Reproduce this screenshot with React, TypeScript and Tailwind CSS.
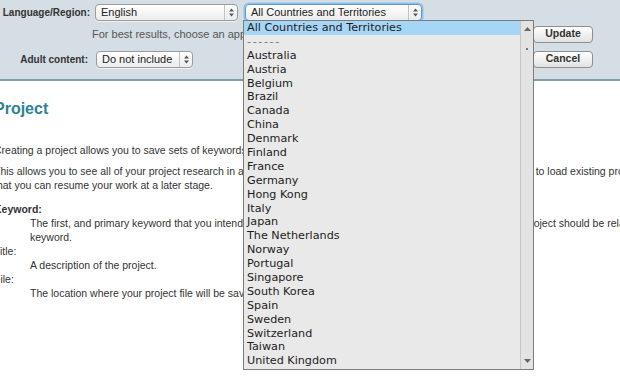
import React from "react";

const countries = [
  "Australia",
  "Austria",
  "Belgium",
  "Brazil",
  "Canada",
  "China",
  "Denmark",
  "Finland",
  "France",
  "Germany",
  "Hong Kong",
  "Italy",
  "Japan",
  "The Netherlands",
  "Norway",
  "Portugal",
  "Singapore",
  "South Korea",
  "Spain",
  "Sweden",
  "Switzerland",
  "Taiwan",
  "United Kingdom",
];

function UpDown() {
  return (
    <svg width="7" height="9" viewBox="0 0 7 9" className="block">
      <path d="M3.5 0.5 L6 3.5 L1 3.5 Z" fill="#555" />
      <path d="M3.5 8.5 L6 5.5 L1 5.5 Z" fill="#555" />
    </svg>
  );
}

function PopUp({
  label,
  width,
  focused,
}: {
  label: string;
  width: string;
  focused?: boolean;
}) {
  return (
    <div
      className={`${width} h-[17px] flex items-stretch rounded-[4px] border bg-gradient-to-b from-white to-[#ececec] text-[11px] text-[#222] ${
        focused
          ? "border-[#5e9bd6] shadow-[0_0_0_1.5px_#8fbfeb]"
          : "border-[#9c9c9c] shadow-[0_1px_0_rgba(255,255,255,0.6)]"
      }`}
    >
      <div className="flex-1 pl-[5px] leading-[15px] whitespace-nowrap overflow-hidden">
        {label}
      </div>
      <div className="w-[13px] border-l border-[#c2c2c2] flex items-center justify-center">
        <UpDown />
      </div>
    </div>
  );
}

function Button({ children }: { children: React.ReactNode }) {
  return (
    <div className="ml-auto w-[60px] h-[17px] rounded-[4px] border border-[#8e8e8e] bg-gradient-to-b from-white to-[#e2e2e2] text-[10.5px] font-bold text-[#333] flex items-center justify-center">
      {children}
    </div>
  );
}

function CountryList() {
  return (
    <div className="absolute left-[243px] top-[20px] w-[291px] h-[350px] border border-[#7c7c7c] bg-[#e9e9e9] flex font-['DejaVu_Sans',Verdana,sans-serif] text-[11.2px] text-[#1c1c1c]">
      <div className="flex-1 overflow-hidden">
        <div className="h-[13.9px] leading-[14.4px] pl-[3px] bg-[#a6d6f6] whitespace-nowrap">
          All Countries and Territories
        </div>
        <div className="h-[13.9px] leading-[14.4px] pl-[3px] tracking-[1.6px] text-[#777]">
          ------
        </div>
        {countries.map((c) => (
          <div
            key={c}
            className="h-[13.9px] leading-[14.4px] pl-[3px] whitespace-nowrap"
          >
            {c}
          </div>
        ))}
      </div>
      <div className="w-[13px] border-l border-[#c6c6c6] bg-[#e3e3e3] flex flex-col items-center">
        <svg width="7" height="4" viewBox="0 0 7 4" className="mt-[6px]">
          <path d="M3.5 0 L7 4 L0 4 Z" fill="#666" />
        </svg>
        <div className="mt-[17px] w-[2px] h-[2px] bg-[#777]" />
        <div className="flex-1" />
        <svg width="7" height="4" viewBox="0 0 7 4" className="mb-[6px]">
          <path d="M3.5 4 L7 0 L0 0 Z" fill="#666" />
        </svg>
      </div>
    </div>
  );
}

export default function App() {
  return (
    <div className="relative w-[620px] h-[383px] overflow-hidden bg-white font-['Liberation_Sans',Arial,sans-serif]">
      {/* settings bar */}
      <div className="h-[81px] bg-[#d4dee4] border-b-2 border-[#7fa0aa] pt-[3px] pr-[27px]">
        <div className="h-[18px] flex items-center">
          <div className="w-[90px] text-right text-[10px] font-bold text-[#333]">
            Language/Region:
          </div>
          <div className="ml-[5px]">
            <PopUp label="English" width="w-[143px]" />
          </div>
          <div className="ml-[7px]">
            <PopUp label="All Countries and Territories" width="w-[177px]" focused />
          </div>
        </div>
        <div className="mt-[4px] h-[18px] flex items-center">
          <div className="pl-[92px] text-[11px] text-[#555] whitespace-nowrap">
            For best results, choose an appropriate language and region.
          </div>
          <Button>Update</Button>
        </div>
        <div className="mt-[7px] h-[18px] flex items-center">
          <div className="w-[88px] text-right text-[10px] font-bold text-[#333]">
            Adult content:
          </div>
          <div className="ml-[8px]">
            <PopUp label="Do not include" width="w-[97px]" />
          </div>
          <Button>Cancel</Button>
        </div>
      </div>

      {/* help text */}
      <div className="-ml-[6px] w-[760px] text-[10.5px] text-[#333] leading-[14px]">
        <h2 className="mt-[18px] text-[16px] leading-[20px] font-bold text-[#2b8394]">
          Project
        </h2>
        <p className="mt-[24px] whitespace-nowrap">
          Creating a project allows you to save sets of keywords and related research.
        </p>
        <p className="mt-[7px] whitespace-nowrap">
          This allows you to see all of your project research in a single place, and also gives you a simple and convenient way to load existing projects so
          <br />
          that you can resume your work at a later stage.
        </p>
        <dl className="mt-[10px] whitespace-nowrap">
          <dt className="font-bold">Keyword:</dt>
          <dd className="ml-[36px]">
            The first, and primary keyword that you intend to research with the project. Ideally the name or title of your project should be related to this
            <br />
            keyword.
          </dd>
          <dt>Title:</dt>
          <dd className="ml-[36px]">A description of the project.</dd>
          <dt>File:</dt>
          <dd className="ml-[36px]">The location where your project file will be saved.</dd>
        </dl>
      </div>

      <CountryList />
    </div>
  );
}
